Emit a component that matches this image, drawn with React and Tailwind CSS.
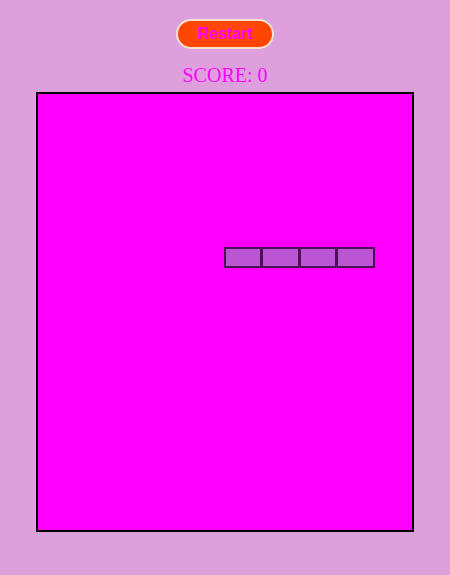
import { useState } from 'react';

const START = [
  { x: 5, y: 7 },
  { x: 6, y: 7 },
  { x: 7, y: 7 },
  { x: 8, y: 7 },
];

export default function App() {
  const [score, setScore] = useState(0);
  const [snake, setSnake] = useState(START);

  const restart = () => {
    setScore(0);
    setSnake(START);
  };

  return (
    <div className="w-[450px] h-[575px] bg-[#dda0dd] flex flex-col items-center pt-[19px]">
      <button
        onClick={restart}
        className="w-[98px] h-[30px] rounded-full bg-[#ff4500] border-2 border-[#f3e3d0] text-[#ff00ff] font-bold text-[16px] font-['Liberation_Sans',Arial,sans-serif] leading-none"
      >
        Restart
      </button>
      <div className="mt-[15px] text-[20px] leading-[23px] text-[#ff00ff] font-['Liberation_Serif','Times_New_Roman',serif]">
        SCORE: {score}
      </div>
      <div className="mt-[5px] w-[378px] h-[440px] border-2 border-black bg-[#ff00ff] grid grid-cols-10 grid-rows-[repeat(20,minmax(0,1fr))]">
        {snake.map((s, i) => (
          <div
            key={i}
            className="-ml-[1px] bg-[#ba55d3] border-2 border-[#4e0f58]"
            style={{ gridColumn: s.x + 1, gridRow: s.y + 1 }}
          />
        ))}
      </div>
    </div>
  );
}
